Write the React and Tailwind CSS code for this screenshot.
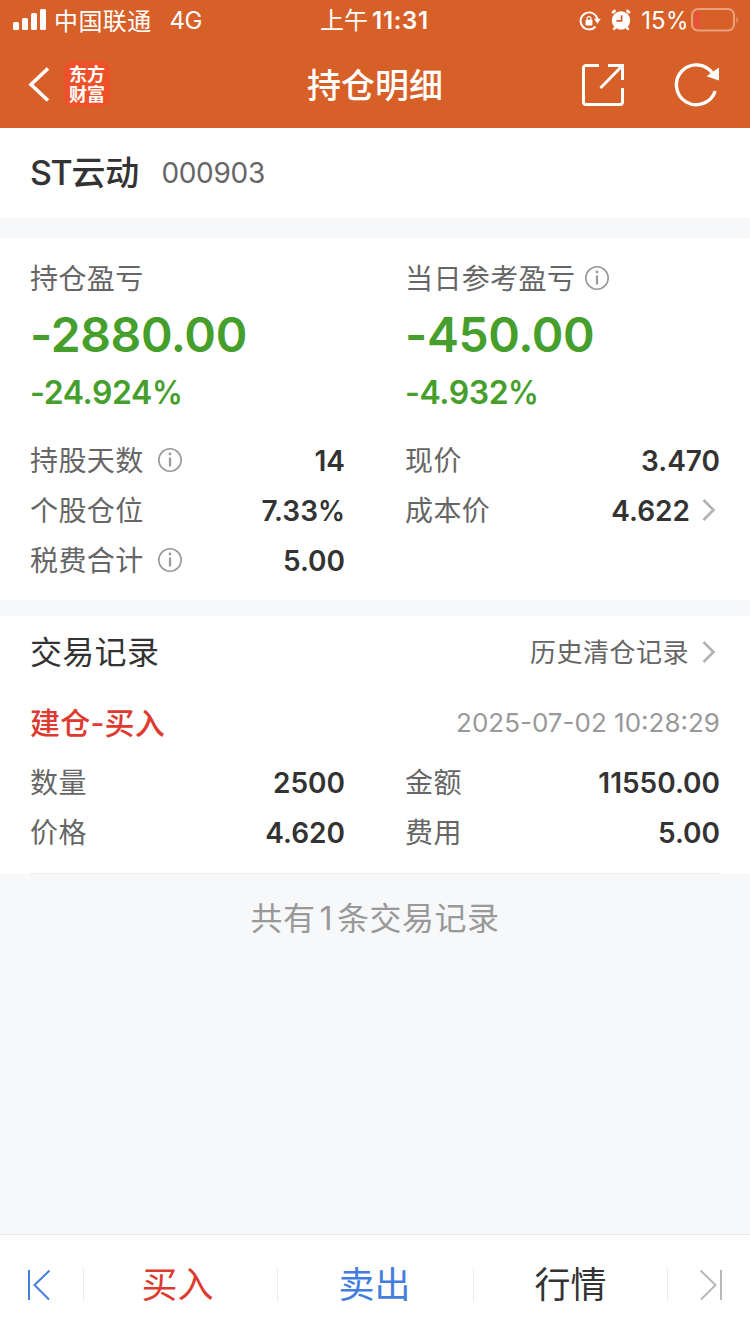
const RECORD = { type: "建仓-买入", time: "2025-07-02 10:28:29", qty: "2500", amount: "11550.00", price: "4.620", fee: "5.00" };

function InfoIcon({ className = "" }) {
  return (
    <svg viewBox="0 0 26 26" className={`size-[26px] shrink-0 ${className}`} fill="none" stroke="#999" strokeWidth="1.6">
      <circle cx="13" cy="13" r="11.2" />
      <path d="M13 10.5v9" strokeWidth="2.2" />
      <circle cx="13" cy="7" r="1.4" fill="#999" stroke="none" />
    </svg>
  );
}

function Chevron() {
  return (
    <svg viewBox="0 0 14 24" className="ml-3 mr-1 h-6 w-3.5 shrink-0" fill="none" stroke="#b2b2b2" strokeWidth="2.6">
      <path d="M1.5 2l10 10-10 10" />
    </svg>
  );
}

/* 百分号单独收窄，避免数值过宽 */
function Num({ children }) {
  if (!children.endsWith("%")) return children;
  return (
    <>
      {children.slice(0, -1)}
      <span className="-mr-[0.04em] inline-block origin-left scale-x-[0.96]">%</span>
    </>
  );
}

/* 标签 + 数值的一行 */
function Row({ label, value, info, more }) {
  return (
    <div className="flex h-[50px] items-center">
      <span className="pt-0.5 text-[28px] tracking-[0.4px] text-[#666]">{label}</span>
      {info && <InfoIcon className="ml-[13.5px]" />}
      <span className="ml-auto pt-0.5 text-[28px] font-semibold text-[#333]"><Num>{value}</Num></span>
      {more && <Chevron />}
    </div>
  );
}

function Summary({ label, value, percent, info }) {
  return (
    <div>
      <div className="flex h-[50px] items-center">
        <span className="pt-0.5 text-[28px] tracking-[0.4px] text-[#666]">{label}</span>
        {info && <InfoIcon className="ml-[9px]" />}
      </div>
      <div className="flex h-[62px] items-center pt-px text-[48px] font-semibold tracking-[-0.4px]">{value}</div>
      <div className="flex h-[54px] items-center pt-0.5 text-[32px] font-semibold tracking-[-0.4px]">
        <span><Num>{percent}</Num></span>
      </div>
    </div>
  );
}

function StatusBar() {
  return (
    <div className="grid h-10 grid-cols-3 items-center pl-[13px] pr-[11px] text-[24px]">
      <div className="flex items-center">
        <svg viewBox="0 0 34 22" className="h-[22px] w-[34px]" fill="#fff">
          <rect x="0" y="13" width="6" height="8" rx="1.5" />
          <rect x="9" y="9" width="6" height="12" rx="1.5" />
          <rect x="18" y="4" width="6" height="17" rx="1.5" />
          <rect x="27" y="0" width="6" height="21" rx="1.5" />
        </svg>
        <span className="ml-[7px] pt-[3px] tracking-[0.4px]">中国联通</span>
        <span className="ml-[18px] pt-0.5 tracking-[-0.6px]">4G</span>
      </div>
      <div className="flex items-center justify-center whitespace-nowrap pt-0.5 pr-[3px]">
        <span>上午</span>
        <span className="ml-1 text-[24px] font-semibold tracking-[0.7px]">11:31</span>
      </div>
      <div className="flex items-center justify-end">
        <svg viewBox="0 0 22 20" className="mt-px h-5 w-[22px] shrink-0" fill="none" stroke="#fff" strokeWidth="1.9">
          <path d="M16.5 15.5A8.5 8.5 0 1 1 18.5 8.5" />
          <path d="M15 7.8h6.8l-3.4 5z" fill="#fff" stroke="none" />
          <rect x="6.6" y="8.8" width="6.8" height="5.800" rx=".8" fill="#fff" stroke="none" />
          <path d="M8.1 9.5V7.5a1.9 1.9 0 0 1 3.8 0v2" strokeWidth="1.2" />
        </svg>
        <svg viewBox="0 0 20 22" className="ml-2.5 h-[22px] w-5 shrink-0" fill="none" stroke="#fff">
          <circle cx="10" cy="11.5" r="9.2" fill="#fff" stroke="none" />
          <path d="M1.7 4.4Q2.200 2.300 4.600 1.700M18.300 4.400Q17.800 2.300 15.400 1.700" strokeWidth="2.800" />
          <path d="M4.600 18l-2.200 2.800M15.400 18l2.200 2.800" strokeWidth="2.400" />
          <path d="M10.600 6.200v5.600H5.400" stroke="#d75f28" strokeWidth="1.700" />
        </svg>
        <span className="ml-2.5 pt-0.5">15<span className="inline-block w-[21.5px] origin-left scale-x-[0.95]">%</span></span>
        <svg viewBox="0 0 48 24" className="ml-[4px] h-6 w-12 shrink-0" fill="none">
          <rect x="1" y="1" width="42" height="21.5" rx="6" stroke="#e9a17f" strokeWidth="2" />
          <path d="M8.5 4v15.500H7a3 3 0 0 1-3-3V7a3 3 0 0 1 3-3z" fill="#eb4e3d" />
          <path d="M45.5 8.500q3 3.200 0 7z" fill="#e9a17f" />
        </svg>
      </div>
    </div>
  );
}

function NavBar() {
  return (
    <div className="grid h-[88px] grid-cols-3 items-center">
      <div className="flex items-center">
        <svg viewBox="0 0 22 36" className="ml-7 h-9 w-[22px]" fill="none" stroke="#fff" strokeWidth="3.6">
          <path d="M20 2.5L3 18.5l17 16" />
        </svg>
        <div className="ml-3.5 flex size-[46px] flex-col items-center justify-center rounded-[9px] bg-[#ed5129] pt-0.5 text-[18px] leading-[20px] font-bold">
          <span>东方</span>
          <span>财富</span>
        </div>
      </div>
      <h1 className="pt-[3px] text-center text-[34px] font-medium">持仓明细</h1>
      <div className="flex items-center justify-end">
        <svg viewBox="0 0 44 44" className="mr-[49px] mt-px size-11" fill="none" stroke="#fff" strokeWidth="3">
          <path d="M18 2.5H5a2.5 2.5 0 0 0-2.500 2.500v34A2.500 2.500 0 0 0 5 41.500h34a2.500 2.500 0 0 0 2.500-2.500V25" />
          <path d="M27 2.500h14.500V17M41 3L19.500 25" />
        </svg>
        <svg viewBox="0 0 46 46" className="mr-[30px] size-[46px]" fill="none" stroke="#fff" strokeWidth="3.4">
          <path d="M41.2 30A19.900 19.900 0 1 1 39 13" />
          <path d="M45 6.500v13L32.500 15.200z" fill="#fff" stroke="none" />
        </svg>
      </div>
    </div>
  );
}

function Footer() {
  return (
    <div className="flex h-[100px] items-center border-t border-[#e9eaec] bg-white text-[36px]">
      <button className="flex w-[83px] pl-[27px]">
        <svg viewBox="0 0 24 32" className="h-8 w-6" fill="none" stroke="#447edc" strokeWidth="2">
          <path d="M2 1v30M22.5 1.5L7.5 16l14.500 14.500" />
        </svg>
      </button>
      <button className="h-[34px] w-[194px] border-l border-[#ececec] pr-1.5 leading-[34px] text-[#dd3a30]">买入</button>
      <button className="h-[34px] w-[196px] border-l border-[#ececec] pr-0.5 leading-[34px] text-[#447edc]">卖出</button>
      <button className="h-[34px] w-[194px] border-l border-[#ececec] leading-[34px] text-[#333]">行情</button>
      <button className="flex h-[34px] flex-1 items-center justify-end border-l border-[#ececec] pr-[27px]">
        <svg viewBox="0 0 24 32" className="h-8 w-6" fill="none" stroke="#b8b8b8" strokeWidth="2">
          <path d="M22 1v30M1.5 1.5L16.500 16 2 30.500" />
        </svg>
      </button>
    </div>
  );
}

export default function App() {
  return (
    <div className="flex h-[1334px] w-[750px] flex-col bg-[#f7f8fa] font-['Inter','Noto_Sans_CJK_SC',sans-serif] leading-none">
      <header className="bg-[#d75f28] text-white">
        <StatusBar />
        <NavBar />
      </header>

      <div className="flex h-[90px] items-center bg-white px-[30px]">
        <span className="text-[34px] font-medium text-[#333]"><span className="tracking-[-1.4px]">ST</span>云动</span>
        <span className="ml-[22px] text-[28px] tracking-[-0.3px] text-[#666]">000903</span>
      </div>

      <section className="mt-5 h-[362px] bg-white px-[30px] pt-[15px]">
        <div className="grid grid-cols-2 gap-x-[60px] text-[#469f2c]">
          <Summary label="持仓盈亏" value="-2880.00" percent="-24.924%" />
          <Summary label="当日参考盈亏" value="-450.00" percent="-4.932%" info />
        </div>
        <div className="mt-4 grid grid-cols-2 gap-x-[60px]">
          <Row label="持股天数" value="14" info />
          <Row label="现价" value="3.470" />
          <Row label="个股仓位" value="7.33%" />
          <Row label="成本价" value="4.622" more />
          <Row label="税费合计" value="5.00" info />
        </div>
      </section>

      <section className="mt-4 h-[258px] bg-white px-[30px]">
        <div className="flex h-[72px] items-center justify-between">
          <h2 className="pt-0.5 text-[32px] tracking-[0.3px] text-[#333]">交易记录</h2>
          <div className="flex items-center text-[26px] tracking-[0.5px] text-[#666]">
            <span className="pt-0.5 pr-px">历史清仓记录</span>
            <Chevron />
          </div>
        </div>
        <div className="flex h-[69px] items-center justify-between">
          <span className="text-[30px] font-medium tracking-[0.2px] text-[#dd3a30]">{RECORD.type}</span>
          <span className="text-[26px] text-[#999]">{RECORD.time}</span>
        </div>
        <div className="grid h-[117px] grid-cols-2 content-start gap-x-[60px] border-b border-[#ececec]">
          <Row label="数量" value={RECORD.qty} />
          <Row label="金额" value={RECORD.amount} />
          <Row label="价格" value={RECORD.price} />
          <Row label="费用" value={RECORD.fee} />
        </div>
      </section>

      <div className="mt-[29px] flex-1 text-center text-[32px] tracking-[0.5px] text-[#999]">
        共有<span className="mx-1">1</span>条交易记录
      </div>

      <Footer />
    </div>
  );
}
